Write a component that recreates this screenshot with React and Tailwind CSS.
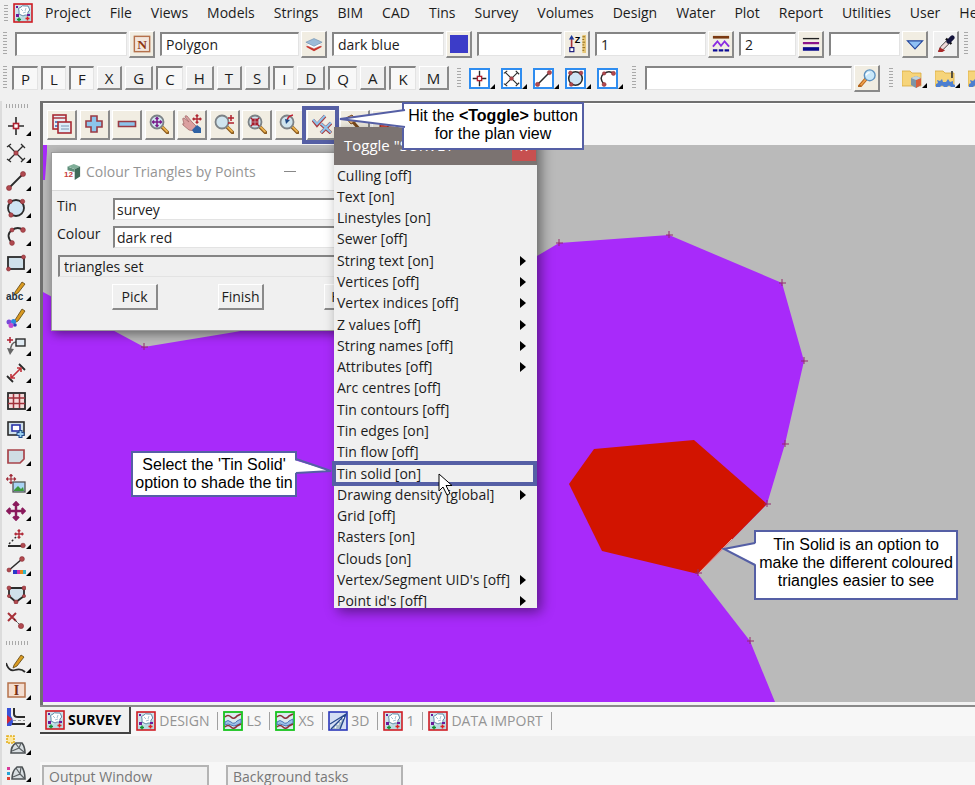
import { useState } from "react";

const raised =
  "border-t border-l border-r-2 border-b-2 border-t-white border-l-white border-r-[#8a8a8a] border-b-[#8a8a8a]";
const sunken =
  "border-t-2 border-l-2 border-r border-b border-t-[#858585] border-l-[#858585] border-r-[#e3e3e3] border-b-[#e3e3e3]";

const menus = [
  "Project", "File", "Views", "Models", "Strings", "BIM", "CAD", "Tins", "Survey",
  "Volumes", "Design", "Water", "Plot", "Report", "Utilities", "User", "Help",
];

const snaps = [
  ["P", true], ["L", true], ["F", true], ["X", false], ["G", false],
  ["C", true], ["H", false], ["T", false], ["S", false], ["I", true],
  ["D", false], ["Q", true], ["A", false], ["K", true], ["M", false],
];

const toggles = [
  ["Culling [off]"],
  ["Text [on]"],
  ["Linestyles [on]"],
  ["Sewer [off]"],
  ["String text [on]", true],
  ["Vertices [off]", true],
  ["Vertex indices [off]", true],
  ["Z values [off]", true],
  ["String names [off]", true],
  ["Attributes [off]", true],
  ["Arc centres [off]"],
  ["Tin contours [off]"],
  ["Tin edges [on]"],
  ["Tin flow [off]"],
  ["Tin solid [on]"],
  ["Drawing density [global]", true],
  ["Grid [off]"],
  ["Rasters [on]"],
  ["Clouds [on]"],
  ["Vertex/Segment UID's [off]", true],
  ["Point id's [off]", true],
];

const RED = "#a8323a";
const INK = "#2b2b2b";

const Dot = ({ x, y, r = 2 }) => <circle cx={x} cy={y} r={r} fill="#b04a50" stroke="#8a2a30" strokeWidth=".6" />;

const Lens = ({ children }) => (
  <>
    <path d="M12.5 12.5l6 6" stroke="#8a5a1c" strokeWidth="3.6" strokeLinecap="round" />
    <path d="M13 12.5l5 5" stroke="#e9b04e" strokeWidth="1.8" strokeLinecap="round" />
    <circle cx="8" cy="8" r="6.5" fill="#cfe4ee" stroke="#7c8286" strokeWidth="1.8" />
    {children}
  </>
);

const fourWay = (c, x, y, s, w) => (
  <path
    transform={`translate(${x} ${y}) scale(${s})`}
    d="M-9 0H9M0-9V9M-6-3l-3 3 3 3M6-3l3 3-3 3M-3-6l3-3 3 3M-3 6l3 3 3-3"
    fill="none"
    stroke={c}
    strokeWidth={w}
  />
);

const icons = {
  plan: (
    <>
      <rect x="1" y="1" width="18" height="18" fill="#b9dbe2" stroke="#d01c24" strokeWidth="1.6" />
      <path d="M2 2h16v7q-6 2-8 5l-8 1z" fill="#cfe4ec" />
      <path d="M6 8q-2-3 2-4 1-2 4-1 4-1 4 2 2 2-1 4 0 4-3 3-2 2-4 0-3 0-2-4z" fill="#fff" stroke="#5d8aa6" />
      <path d="M8 6l2 2M13 5l-1 3M10 10l3-1" stroke="#8fb4c8" strokeWidth=".8" />
      <path d="M3 3h2v2H3zM3 11h3v3H3zM14 11h3v2h-3z" fill="#6a1b9a" />
      <path d="M4 16.500h4M6 14.500v4" stroke="#159030" strokeWidth="1.500" />
      <path d="M12.500 15.500h4M14.500 13.500v4" stroke="#e02020" strokeWidth="1.500" />
    </>
  ),
  section: (
    <>
      <rect x="1" y="1" width="18" height="18" fill="#dcebf0" stroke="#16c41c" strokeWidth="1.8" />
      <path d="M2 6q3-3 6 0t6-1l4-2" fill="none" stroke="#8a3038" strokeWidth="1.6" />
      <path d="M2 11q3-3 6 0t6-1l4-2v4l-4 2q-3 2-6 0t-6 0z" fill="#9cc0e8" stroke="#4d78b8" />
      <path d="M2 16q3-3 6 0t6-1l4-2" fill="none" stroke="#8a3038" strokeWidth="1.6" />
    </>
  ),
  perspective: (
    <>
      <rect x="1" y="1" width="18" height="18" fill="#d4def4" stroke="#2a36b8" strokeWidth="1.6" />
      <path d="M3 18L18 3l-5 15z" fill="#a9bccb" />
      <path d="M2 13L18 3l-6 15M3 18L17 4" fill="none" stroke="#26478c" strokeWidth="1.3" />
      <path d="M7 17L16 6" stroke="#fff" strokeWidth="1.2" strokeDasharray="2 2" />
    </>
  ),
  name: (
    <>
      <rect x="1.500" y="1.500" width="17" height="17" fill="#f2e6dc" stroke="#b5714b" strokeWidth="1.600" />
      <text x="10" y="15" textAnchor="middle" fontSize="15" fontWeight="700" fontFamily="Liberation Serif, serif" fill="#8e3513">N</text>
    </>
  ),
  layers: (
    <>
      <path d="M1 13l9-4 9 4-9 5z" fill="#c8342c" />
      <path d="M1 11l9-4 9 4-9 4z" fill="#fff" stroke="#c9c9c9" strokeWidth=".5" />
      <path d="M1 8l9-4 9 4-9 4.500z" fill="#9bbbd8" stroke="#6f8fae" strokeWidth=".7" />
    </>
  ),
  swatch: <path d="M0 0h20v20H0z" fill="#3c3cc8" />,
  height: (
    <>
      <path d="M4 16V4" stroke={RED} strokeWidth="1.800" />
      <path d="M4 0l3 5H1z" fill="#1c3a9c" />
      <rect x="2" y="14" width="4.500" height="4.500" fill="#fff" stroke="#1b1b7a" strokeWidth="1.300" />
      <text x="7.500" y="9" fontSize="10" fontWeight="700" fontFamily="Liberation Sans, sans-serif" fill="#000">Z</text>
      <path d="M16 0h4v20h-4z" fill="#e8c878" />
      <path d="M16 2h3M16 5h2M16 8h3M16 11h2M16 14h3M16 17h2" stroke="#8a6414" />
    </>
  ),
  linestyle: (
    <>
      <path d="M1 2.500h18" stroke="#7b3a10" strokeWidth="3" />
      <path d="M1 13l5-6 4 5 4-5 5 6" fill="none" stroke="#8a2be2" strokeWidth="2" />
      <path d="M1 17h18" stroke="#0c0c96" strokeWidth="2.500" strokeDasharray="5 1.500" />
    </>
  ),
  weight: (
    <>
      <path d="M1 4h18" stroke="#222" strokeWidth="1.500" />
      <path d="M1 9h18" stroke="#8a148a" strokeWidth="2.500" />
      <path d="M1 15.500h18" stroke="#0a0a8c" strokeWidth="4" />
    </>
  ),
  drop: <path d="M1.500 6.500h17L10 15.500z" fill="#8fc0f4" stroke="#23459c" strokeWidth="1.200" />,
  dropper: (
    <>
      <path d="M2 18l2-5 6-6 3 3-6 6z" fill="#f0dada" stroke="#333" />
      <path d="M1 19l2-5 6 3-3 2z" fill="#a82828" />
      <path d="M10 4l6 6" stroke="#111" strokeWidth="2.500" />
      <path d="M13 7l4-4" stroke="#14143c" strokeWidth="5" strokeLinecap="round" />
    </>
  ),
  point: (
    <>
      <path d="M10 1v18M2 10h16" stroke={INK} strokeWidth="1.600" />
      <rect x="7.500" y="7.500" width="5" height="5" fill="#fff" stroke="#b02030" strokeWidth="1.600" />
    </>
  ),
  cross: (
    <>
      <path d="M3 3l14 14M17 3L3 17M1 4l4-3M15 1l4 4M1 16l4 3M15 19l4-4" stroke={INK} strokeWidth="1.300" />
      <Dot x={10} y={10} r={2.200} />
    </>
  ),
  line: (
    <>
      <path d="M3 17L17 3" stroke={INK} strokeWidth="1.800" />
      <Dot x={3} y={17} r={2.500} />
      <Dot x={17} y={3} r={2.500} />
    </>
  ),
  circle: (
    <>
      <circle cx="10" cy="10" r="8" fill="#cfe4f3" stroke={INK} strokeWidth="1.800" />
      <Dot x={4} y={3.500} r={2.200} />
      <Dot x={16.500} y={3.500} r={2.200} />
      <Dot x={5} y={17} r={2.200} />
    </>
  ),
  arc: (
    <>
      <path d="M6 17Q-1 9 6 4q6-4 11 0" fill="none" stroke={INK} strokeWidth="1.800" />
      <Dot x={6} y={4} />
      <Dot x={17} y={4} r={2.400} />
      <Dot x={6} y={17} r={2.400} />
    </>
  ),
  rect: (
    <>
      <rect x="2" y="4" width="16" height="12" fill="#cfe0ea" stroke={INK} strokeWidth="1.800" />
      <Dot x={17.500} y={4} />
      <Dot x={2.500} y={16} />
    </>
  ),
  text: (
    <>
      <path d="M9 11L16 1l3 2-7 9-4 2z" fill="#d99a22" stroke="#5c4310" strokeWidth=".8" />
      <text x="0" y="19" fontSize="10" fontWeight="700" fontFamily="Liberation Sans, sans-serif" fill="#23323e">abc</text>
    </>
  ),
  paint: (
    <>
      <path d="M9 12L16 1l3 2-7 10-4 2z" fill="#d99a22" stroke="#5c4310" strokeWidth=".8" />
      <circle cx="3" cy="14" r="2.500" fill="#7a4ad8" />
      <circle cx="7.500" cy="13.500" r="2.500" fill="#2a8ae0" />
      <circle cx="5" cy="17.500" r="2.500" fill="#c44ad0" />
      <circle cx="9" cy="17" r="1.800" fill="#3434c0" />
    </>
  ),
  leader: (
    <>
      <path d="M1 4h6M4 1v6" stroke="#b02030" strokeWidth="1.500" />
      <path d="M19 6H10Q5 6 4 16" fill="none" stroke="#666" strokeWidth="1.600" />
      <path d="M1 12l3 7 4-6z" fill="#666" />
      <rect x="10" y="3" width="9" height="7" fill="#dfeaf2" stroke={INK} strokeWidth="1.400" />
    </>
  ),
  dimension: (
    <>
      <path d="M1 13l6 6M13 1l6 6" stroke={INK} strokeWidth="1.800" />
      <path d="M5 15L15 5M5 11v4h4M11 5h4v4" fill="none" stroke="#c0303a" strokeWidth="1.600" />
    </>
  ),
  table: (
    <>
      <rect x="2" y="2" width="17" height="16" fill="#f4d9da" stroke={INK} strokeWidth="1.800" />
      <path d="M2 7h17M2 12.500h17M7.500 3v14M13.500 3v14" stroke="#a0303a" strokeWidth="1.500" />
    </>
  ),
  viewport: (
    <>
      <rect x="2" y="3" width="16" height="13" fill="#cfe0ea" stroke={INK} strokeWidth="1.600" />
      <rect x="6" y="6" width="8" height="6" fill="#fff" stroke="#2a34a8" strokeWidth="1.600" />
      <path d="M14.500 11v8M10.500 15h8" stroke="#234a8c" strokeWidth="4" />
      <path d="M14.500 12v6M11.500 15h6" stroke="#9ad0f0" strokeWidth="1.800" />
    </>
  ),
  sheet: <path d="M2 4h16v9l-4 4H2z" fill="#cfdde4" stroke="#a8434a" strokeWidth="1.700" />,
  image: (
    <>
      {fourWay("#a02a38", 5, 5, 0.5, 2.4)}
      <rect x="7" y="8" width="12" height="10" fill="#a9d4f4" stroke="#555" strokeWidth="1.300" />
      <path d="M8 16l4-4 3 3 2-2 1 4H8z" fill="#3c9a3c" />
    </>
  ),
  move: fourWay("#8a1a5c", 10, 10, 0.95, 2.6),
  angle: (
    <>
      <path d="M3 15L11 7" stroke={INK} strokeWidth="1.400" strokeDasharray="2 2" />
      <path d="M2 17h15" stroke={INK} strokeWidth="2" />
      {fourWay("#b02a38", 13, 5, 0.45, 3)}
      <Dot x={17} y={16.500} r={2.300} />
    </>
  ),
  ramp: (
    <>
      <path d="M2 15L16 3" stroke={INK} strokeWidth="1.600" />
      <Dot x={16} y={3} r={2.400} />
      <Dot x={3} y={14} />
      <path d="M7 14h4v4H7z" fill="#2838c8" />
      <path d="M11 14h3v4h-3z" fill="#c830b0" />
      <path d="M14 14h3v4h-3z" fill="#e88020" />
      <path d="M17 14h3v4h-3z" fill="#30b8c8" />
    </>
  ),
  polygon: (
    <>
      <path d="M3 4h15v8l-8 6-7-6z" fill="#cfe0ea" stroke={INK} strokeWidth="1.800" />
      <Dot x={3} y={4} />
      <Dot x={18} y={4} />
      <Dot x={10} y={18} />
      <Dot x={3} y={12} r={1.600} />
      <Dot x={18} y={12} r={1.600} />
    </>
  ),
  remove: (
    <>
      <path d="M2 2l8 8M10 2l-8 8" stroke="#a83038" strokeWidth="2" />
      <path d="M8 8l6 6" stroke={INK} strokeDasharray="2 1" />
      <Dot x={15} y={15} r={2.600} />
    </>
  ),
  sketch: (
    <>
      <path d="M8 12L15 2l3 2-7 9-4 2z" fill="#d99a22" stroke="#5c4310" strokeWidth=".8" />
      <path d="M0 10q3 9 9 7t10 2" fill="none" stroke={INK} strokeWidth="1.800" />
    </>
  ),
  info: (
    <>
      <rect x="2" y="3" width="17" height="14" fill="#f3ddd0" stroke="#b5714b" strokeWidth="1.500" />
      <text x="10.500" y="15" textAnchor="middle" fontSize="14" fontWeight="700" fontFamily="Liberation Serif, serif" fill="#7a2f12">I</text>
    </>
  ),
  road: (
    <>
      <path d="M1 1v18h4q4-4 0-10V1z" fill="#3a52d8" />
      <path d="M1 8l5 4-5 5z" fill="#d02838" />
      <path d="M8 1v6q0 3 4 3h7M6 17h13" fill="none" stroke={INK} strokeWidth="2" />
      <path d="M7 13.500h12" stroke="#999" strokeDasharray="3 2" />
    </>
  ),
  pad: (
    <>
      <rect x="1" y="1" width="7" height="7" fill="#ffe9a0" stroke="#e4b020" strokeWidth="1.600" strokeDasharray="2 1" />
      <path d="M5 18q0-7 5-10h6q3 4 3 10z" fill="#d9dfe2" stroke="#4c5154" strokeWidth="1.600" />
      <path d="M6 16l7-3 2-5M13 13l5 4M10 9l3 4" fill="none" stroke="#5c6164" strokeWidth="1.200" />
    </>
  ),
  padStyle: (
    <>
      <path d="M1 5h3v3H1z" fill="#d83a9a" />
      <path d="M1 10h3v3H1z" fill="#28a4d4" />
      <path d="M1 15h3v3H1z" fill="#e04030" />
      <path d="M6 17q0-8 5-12h5q3 5 3 12z" fill="#d9dfe2" stroke="#4c5154" strokeWidth="1.600" />
      <path d="M7 15l7-3 1-7M14 12l4 4M10 6l4 6" fill="none" stroke="#5c6164" strokeWidth="1.200" />
    </>
  ),
  windows: (
    <>
      <rect x="1" y="1" width="13" height="14" fill="#e8edf4" stroke="#a82a34" strokeWidth="1.600" />
      <path d="M1 4h13" stroke="#a82a34" strokeWidth="1.400" />
      <path d="M3 7h3v2H3zM3 11h3v2H3z" fill="#5d86c4" />
      <rect x="6" y="8" width="13" height="11" fill="#dcecf8" stroke="#a82a34" strokeWidth="1.600" />
      <path d="M9 12h8M9 15h8" stroke="#7d94b4" strokeWidth="1.200" />
    </>
  ),
  plus: <path d="M7 2h6v5h5v6h-5v5H7v-5H2V7h5z" fill="#8cc4ec" stroke="#9a3a44" strokeWidth="1.600" />,
  minus: <path d="M1.500 7.500h17v5h-17z" fill="#8cc4ec" stroke="#9a3a44" strokeWidth="1.600" />,
  zoomAll: <Lens>{fourWay("#7a1a8a", 8, 8, 0.5, 3)}</Lens>,
  pan: (
    <>
      <path d="M1 6q-1-2 1-2l5 4-4-5q0-2 2-1l5 6 4 4-1 5-6-1-6-5q-1-2 1-1z" fill="#dba0a0" stroke="#a46c6c" strokeWidth=".8" />
      <path d="M10 16l5-5 4 3v5h-7z" fill="#2f62a4" />
      {fourWay("#b02a34", 15, 5, 0.45, 3)}
    </>
  ),
  zoomInOut: (
    <Lens>
      <path d="M14 4h6M17 1v6M14 9h6" stroke="#b0202c" strokeWidth="1.500" />
    </Lens>
  ),
  zoomExtent: (
    <Lens>
      <path d="M4 4l3 3M12 4L9 7M4 12l3-3M12 12L9 9M4.500 7h2.500V4.500M11.500 7H9V4.500M4.500 9H7v2.500M11.500 9H9v2.500" fill="none" stroke="#a81c2c" strokeWidth="1.500" />
    </Lens>
  ),
  zoomPrev: (
    <Lens>
      <path d="M14 1q-6 1-6 7" fill="none" stroke="#c02030" strokeWidth="1.400" />
      <path d="M6 5l1 5 4-4z" fill="#1e4a86" />
    </Lens>
  ),
  toggle: (
    <>
      <path d="M1 6l4 5L13 2" fill="none" stroke="#a83c44" strokeWidth="3.400" />
      <path d="M1 5.500l4 4.500L13 1.500" fill="none" stroke="#8cc4ec" strokeWidth="2" />
      <path d="M9 10l10 9M19 9L9 19" stroke="#a83c44" strokeWidth="3.600" />
      <path d="M9 9.500l10 9M19 8.500L9 18.500" stroke="#8cc4ec" strokeWidth="2.200" />
    </>
  ),
  brush: (
    <>
      <path d="M2 4l6-3 5 6-6 3z" fill="#e8b070" stroke="#7c4a1c" />
      <path d="M9 8l8 9" stroke="#7c4a1c" strokeWidth="3" />
    </>
  ),
  plot: <path d="M3 9h8v4h6v5H3z" fill="#d84a3a" stroke="#802018" />,
  search: (
    <>
      <path d="M9 11l-7 8" stroke="#b5651c" strokeWidth="4" strokeLinecap="round" />
      <path d="M9 11l-6 7" stroke="#f0a04a" strokeWidth="1.800" />
      <circle cx="13" cy="7" r="6" fill="#c9e8fa" stroke="#5d92c0" strokeWidth="1.500" />
      <path d="M9 7q1-3 4-3" fill="none" stroke="#fff" strokeWidth="1.600" />
    </>
  ),
  folderCube: (
    <>
      <path d="M0 3h8l2 2h9v13H0z" fill="#f6d47a" stroke="#d9a93c" strokeWidth=".8" />
      <path d="M9 10l5-2 5 2v7l-5 3-5-3z" fill="#7d95a8" />
      <path d="M14 12l5-2v7l-5 3z" fill="#d8603c" />
      <path d="M9 10l5-2 5 2-5 2z" fill="#c3d4de" />
    </>
  ),
  folderGear: (
    <>
      <path d="M0 3h8l2 2h9v13H0z" fill="#f6d47a" stroke="#d9a93c" strokeWidth=".8" />
      <path d="M17 3v7" stroke="#333" strokeWidth="1.600" />
      <path d="M1 19v-3l2-1-1-3 3 1 2-2 1 3h3l2-3 2 3 3-1v3l2 1v2h-4q-2-3-4 0h-3q-2-3-4 0z" fill="#4d7fd0" />
    </>
  ),
  app: (
    <>
      <path d="M5 4l7-3 7 3-6 3z" fill="#7fae98" />
      <path d="M5 4l8 3v12l-8-3z" fill="#fff" />
      <path d="M13 7l6-3v11l-6 4z" fill="#3f6a58" />
      <path d="M5 4l8 3v3L5 8z" fill="#5f8f7a" />
      <text x="1" y="16" fontSize="9" fontWeight="700" fontFamily="Liberation Sans, sans-serif" fill="#c84040">12</text>
    </>
  ),
};

function Icon({ name, className = "size-5" }) {
  return (
    <svg viewBox="0 0 20 20" className={`shrink-0 ${className}`} aria-hidden="true">
      {icons[name]}
    </svg>
  );
}

function Grip({ className = "h-6" }) {
  return (
    <span
      className={`w-1 shrink-0 bg-[repeating-linear-gradient(#a9a9a9_0_1px,transparent_1px_3px)] ${className}`}
    />
  );
}

// toolbar icon with the small black fly-out corner
function FlyoutButton({ name, framed }) {
  return (
    <button aria-label={name} className="flex shrink-0 items-end">
      <span className={framed ? "border-2 border-[#2f8df0] bg-white" : ""}>
        <Icon name={name} className={framed ? "block size-[17px]" : "block size-5"} />
      </span>
      <svg viewBox="0 0 5 5" className="size-[5px]" aria-hidden="true">
        <path d="M5 0v5H0z" fill="#000" />
      </svg>
    </button>
  );
}

function Field({ label, value = "", width, icon }) {
  return (
    <div className="flex shrink-0 items-center gap-[2px]">
      <input
        aria-label={label}
        defaultValue={value}
        className={`h-6 bg-white px-1 outline-none ${sunken} ${width}`}
      />
      <button aria-label={`${label} list`} className={`grid h-[27px] w-[26px] place-items-center bg-[#f1ede2] ${raised}`}>
        <Icon name={icon} className="size-[18px]" />
      </button>
    </div>
  );
}

function Callout({ className, tail, points, line, children }) {
  return (
    <div
      className={`absolute z-30 border-2 border-[#555fa5] bg-white text-center font-['Liberation_Sans',Arial,sans-serif] text-base leading-[18px] text-black ${className}`}
    >
      {children}
      <svg className={`absolute overflow-visible ${tail}`} aria-hidden="true">
        <polygon points={points} fill="#fff" />
        <polyline points={line} fill="none" stroke="#555fa5" strokeWidth="2" />
      </svg>
    </div>
  );
}

function SideBar() {
  const upper = [
    "point", "cross", "line", "circle", "arc", "rect", "text", "paint", "leader", "dimension",
    "table", "viewport", "sheet", "image", "move", "angle", "ramp", "polygon", "remove",
  ];
  const lower = ["sketch", "info", "road", "pad", "padStyle"];
  const hGrip = "h-1 w-6 bg-[repeating-linear-gradient(90deg,#a9a9a9_0_1px,transparent_1px_3px)]";

  return (
    <aside className="flex w-10 shrink-0 flex-col border-l-2 border-[#dcdcdc] pl-1">
      <span className={`mt-[3px] mb-1 shrink-0 ${hGrip}`} />
      <div className="grid h-[523px] shrink-0 items-center">
        {upper.map((n) => (
          <FlyoutButton key={n} name={n} />
        ))}
      </div>
      <span className={`mt-[6px] mb-1 shrink-0 ${hGrip}`} />
      <div className="grid h-[137px] shrink-0 items-center">
        {lower.map((n) => (
          <FlyoutButton key={n} name={n} />
        ))}
      </div>
    </aside>
  );
}

function Plan() {
  const ticks = [
    [144, 347], [559, 243], [669, 235], [782, 283], [804, 361], [785, 444], [767, 504], [698, 573], [750, 641],
  ];
  return (
    <svg
      viewBox="43 145 932 557"
      preserveAspectRatio="xMinYMin slice"
      className="absolute inset-0 h-full w-full"
      role="img"
      aria-label="survey tin"
    >
      <path d="M43 145h4v6l-2 29h-2z" fill="#a82afa" />
      <polygon
        points="43,292 118,333 144,347 235,332 400,300 537,256 559,243 669,235 782,283 804,361 785,444 767,504 698,574 750,641 775,702 775,710 43,710"
        fill="#a82afa"
      />
      <polygon points="594,449 694,440 767,504 698,574 602,551 569,484" fill="#d21400" />
      <path d="M698 574l34-35" stroke="#e8b0a8" strokeWidth="1" />
      {ticks.map(([x, y]) => (
        <path key={x} d={`M${x - 3} ${y}h7M${x} ${y - 4}v7`} stroke="#96286e" strokeWidth="1" />
      ))}
    </svg>
  );
}

function ColourDialog() {
  return (
    <section className="absolute top-[7px] left-2 z-10 w-[380px] border border-[#9b9b9b] bg-[#f0f0f0] pb-5 shadow-[2px_3px_10px_rgba(0,0,0,0.45)]">
      <header className="flex h-[38px] items-center border-b border-[#d9d9d9] bg-white pl-[11px] text-[#949494]">
        <Icon name="app" className="size-[18px]" />
        <h2 className="ml-[5px]">Colour Triangles by Points</h2>
        <button aria-label="Minimise" className="ml-7 h-px w-3 bg-[#888]" />
      </header>
      <div className="mt-[7px] flex gap-x-2 pl-[5px]">
        <label htmlFor="tin" className="w-12 leading-4">Tin</label>
        <input id="tin" defaultValue="survey" className={`h-[22px] grow bg-white px-[2px] outline-none ${sunken}`} />
      </div>
      <div className="mt-[6px] flex gap-x-2 pl-[5px]">
        <label htmlFor="colour" className="w-12 leading-4">Colour</label>
        <input id="colour" defaultValue="dark red" className={`h-[22px] grow bg-white px-[2px] outline-none ${sunken}`} />
      </div>
      <input
        aria-label="Status"
        readOnly
        value="triangles set"
        className={`mt-[7px] ml-[6px] h-[22px] w-[366px] px-1 outline-none ${sunken}`}
      />
      <div className="mt-[7px] flex justify-center gap-[60px]">
        {["Pick", "Finish", "Help"].map((b) => (
          <button key={b} className={`h-[26px] w-[46px] whitespace-nowrap ${raised}`}>
            {b}
          </button>
        ))}
      </div>
    </section>
  );
}

function ToggleMenu({ selected, onSelect }) {
  return (
    <div className="absolute top-6 left-[291px] z-20 h-[481px] w-[203px] overflow-y-clip bg-[#f0f0f0] shadow-[4px_4px_12px_rgba(0,0,0,0.45)]">
      <header className="flex h-[38px] items-center justify-between bg-[#7b7371] pl-[10px] text-[15px] text-white">
        <h2>Toggle "SURVEY"</h2>
        <button aria-label="Close" className="mr-px mb-1 h-[34px] w-6 bg-[#c75050] pt-2 text-xs">
          ✕
        </button>
      </header>
      <ul className="grid h-[447px]">
        {toggles.map(([name, sub]) => (
          <li key={name} className="relative grid">
            <button onClick={() => onSelect(name)} className="flex min-h-0 items-center justify-between pr-[11px] pl-[3px] leading-5">
              {name}
              {sub && (
                <svg viewBox="0 0 6 10" className="h-[10px] w-[6px]" aria-hidden="true">
                  <path d="M0 0l6 5-6 5z" fill="#000" />
                </svg>
              )}
            </button>
            {selected === name && (
              <span className="pointer-events-none absolute -inset-y-[2px] right-0 -left-[2px] border-4 border-[#555fa5]" />
            )}
          </li>
        ))}
      </ul>
    </div>
  );
}

function PlanView() {
  const [selected, setSelected] = useState("Tin solid [on]");
  const tools = [
    "windows", "plus", "minus", "zoomAll", "pan", "zoomInOut", "zoomExtent", "zoomPrev", "toggle", "brush", "plot",
  ];

  return (
    <main className="relative flex min-h-0 grow flex-col border-t-2 border-l-[3px] border-[#707070]">
      <div className="flex h-[42px] shrink-0 items-center border-t border-white bg-[#f5f5f5] pl-1">
        <div className="grid w-[358px] grid-cols-11">
          {tools.map((t) => (
            <span key={t} className="relative">
              <button aria-label={t} className={`grid h-[30px] w-[30px] place-items-center bg-[#f1ede2] ${raised}`}>
                <Icon name={t} className="size-5" />
              </button>
              {t === "toggle" && (
                <span className="absolute -top-1 -left-[5px] h-[38px] w-[37px] border-4 border-[#555fa5]" />
              )}
            </span>
          ))}
        </div>
      </div>
      <div className="relative min-h-0 grow border-b-[3px] border-[#f2f2f2] bg-[#bababa]">
        <div className="absolute inset-0 overflow-hidden">
          <Plan />
        </div>
        <ColourDialog />
      </div>

      <ToggleMenu selected={selected} onSelect={setSelected} />

      <Callout
        className="-top-px left-[359px] h-12 w-[182px] pt-[3px]"
        tail="-top-[2px] -left-[66px] h-12 w-16"
        points="2,17 67,8 67,26"
        line="67,8 2,17 67,25"
      >
        Hit the <b>&lt;Toggle&gt;</b> button
        <br />
        for the plan view
      </Callout>
      <Callout
        className="top-[348px] left-[88px] h-[46px] w-[166px] pt-[3px]"
        tail="-top-[2px] -right-[38px] h-[46px] w-9"
        points="-3,9 34,20 -3,22"
        line="-1,8 34,20 -1,22"
      >
        Select the 'Tin Solid'
        <br />
        option to shade the tin
      </Callout>
      <Callout
        className="top-[427px] left-[711px] h-[70px] w-[204px] pt-1"
        tail="-top-[2px] -left-[34px] h-[68px] w-8"
        points="2,19 35,13 35,35"
        line="33,13 2,19 33,35"
      >
        Tin Solid is an option to
        <br />
        make the different coloured
        <br />
        triangles easier to see
      </Callout>

      <svg viewBox="0 0 14 24" className="absolute top-[370px] left-[395px] z-40 h-6 w-[14px]" aria-hidden="true">
        <path d="M1 1v17l4-4 4 8 3-1.500-4-8h6z" fill="#fff" stroke="#000" strokeWidth="1" />
      </svg>
    </main>
  );
}

const views = [
  ["plan", "SURVEY"],
  ["plan", "DESIGN"],
  ["section", "LS"],
  ["section", "XS"],
  ["perspective", "3D"],
  ["plan", "1"],
  ["plan", "DATA IMPORT"],
];

export default function App() {
  const [view, setView] = useState("SURVEY");

  return (
    <div className="flex h-screen flex-col overflow-hidden bg-[#f0f0f0] font-['Open_Sans','Segoe_UI',sans-serif] text-sm text-[#1c1c1c]">
      <nav className="flex h-[26px] shrink-0 items-center overflow-hidden pl-1">
        <Grip className="h-4" />
        <Icon name="plan" className="ml-[5px] size-5" />
        <div className="ml-3 flex gap-[19px]">
          {menus.map((m) => (
            <button key={m} className="whitespace-nowrap">
              {m}
            </button>
          ))}
        </div>
      </nav>

      <div className="flex h-9 shrink-0 items-center gap-[5px] overflow-hidden pl-[3px]">
        <Grip className="mr-[3px] h-6" />
        <Field label="Name" width="w-[112px]" icon="name" />
        <Field label="Model" value="Polygon" width="w-[139px]" icon="layers" />
        <Field label="Colour" value="dark blue" width="w-[112px]" icon="swatch" />
        <Field label="Height" width="w-[85px]" icon="height" />
        <Field label="Linestyle" value="1" width="w-[111px]" icon="linestyle" />
        <Field label="Weight" value="2" width="w-[57px]" icon="weight" />
        <Field label="Tinable" width="w-[71px]" icon="drop" />
        <button aria-label="Pick attributes" className={`grid h-[27px] w-[26px] shrink-0 place-items-center ${raised}`}>
          <Icon name="dropper" className="size-[18px]" />
        </button>
        <Grip />
      </div>

      <div className="flex h-8 shrink-0 items-center overflow-hidden pl-[3px]">
        <Grip />
        <div className="ml-[5px] flex gap-[3px]">
          {snaps.map(([s, on]) => (
            <button
              key={s}
              aria-pressed={on}
              className={`h-6 px-[7px] text-[15px] leading-5 ${on ? `bg-[#f8f8f8] ${sunken}` : raised}`}
            >
              {s}
            </button>
          ))}
        </div>
        <Grip className="ml-2 h-5" />
        <div className="ml-2 flex gap-[6px]">
          {["point", "cross", "line", "circle", "arc"].map((n) => (
            <FlyoutButton key={n} name={n} framed />
          ))}
        </div>
        <Grip className="mx-[9px] h-6" />
        <Field label="Search" width="w-[207px]" icon="search" />
        <Grip className="mx-[9px] h-5" />
        <div className="flex gap-2">
          <FlyoutButton name="folderCube" />
          <FlyoutButton name="folderGear" />
          <FlyoutButton name="folderGear" />
        </div>
      </div>

      <div className="mt-[7px] flex min-h-0 grow">
        <SideBar />
        <div className="flex min-w-0 grow flex-col">
          <PlanView />
          <div className="flex h-[31px] shrink-0 items-start border-t-2 border-[#8a8a8a] bg-[#f7f7f7] text-[#949494]">
            {views.map(([icon, name]) => (
              <button
                key={name}
                onClick={() => setView(name)}
                className={
                  view === name
                    ? "mr-[5px] flex h-[27px] items-center gap-[3px] border-r-2 border-b-2 border-[#444] bg-[#f0f0f0] pr-2 pl-[5px] font-bold text-black"
                    : "mr-[5px] flex h-[27px] items-center gap-[3px] whitespace-nowrap"
                }
              >
                <Icon name={icon} className="size-5" />
                {name}
                {view !== name && <span className="ml-[5px] h-[18px] w-px bg-[#a0a0a0]" />}
              </button>
            ))}
          </div>
          <div className="h-[26px] shrink-0" />
          <div className="flex h-[23px] shrink-0 gap-[17px] overflow-hidden bg-[#f7f7f7] pt-[3px] pl-[2px] text-[#777]">
            <div className="h-8 w-[167px] border-2 border-[#b4b4b4] bg-[#f0f0f0] pl-[5px]">Output Window</div>
            <div className="h-8 w-[177px] border-2 border-[#b4b4b4] bg-[#f0f0f0] pl-[5px]">Background tasks</div>
          </div>
        </div>
      </div>
    </div>
  );
}
